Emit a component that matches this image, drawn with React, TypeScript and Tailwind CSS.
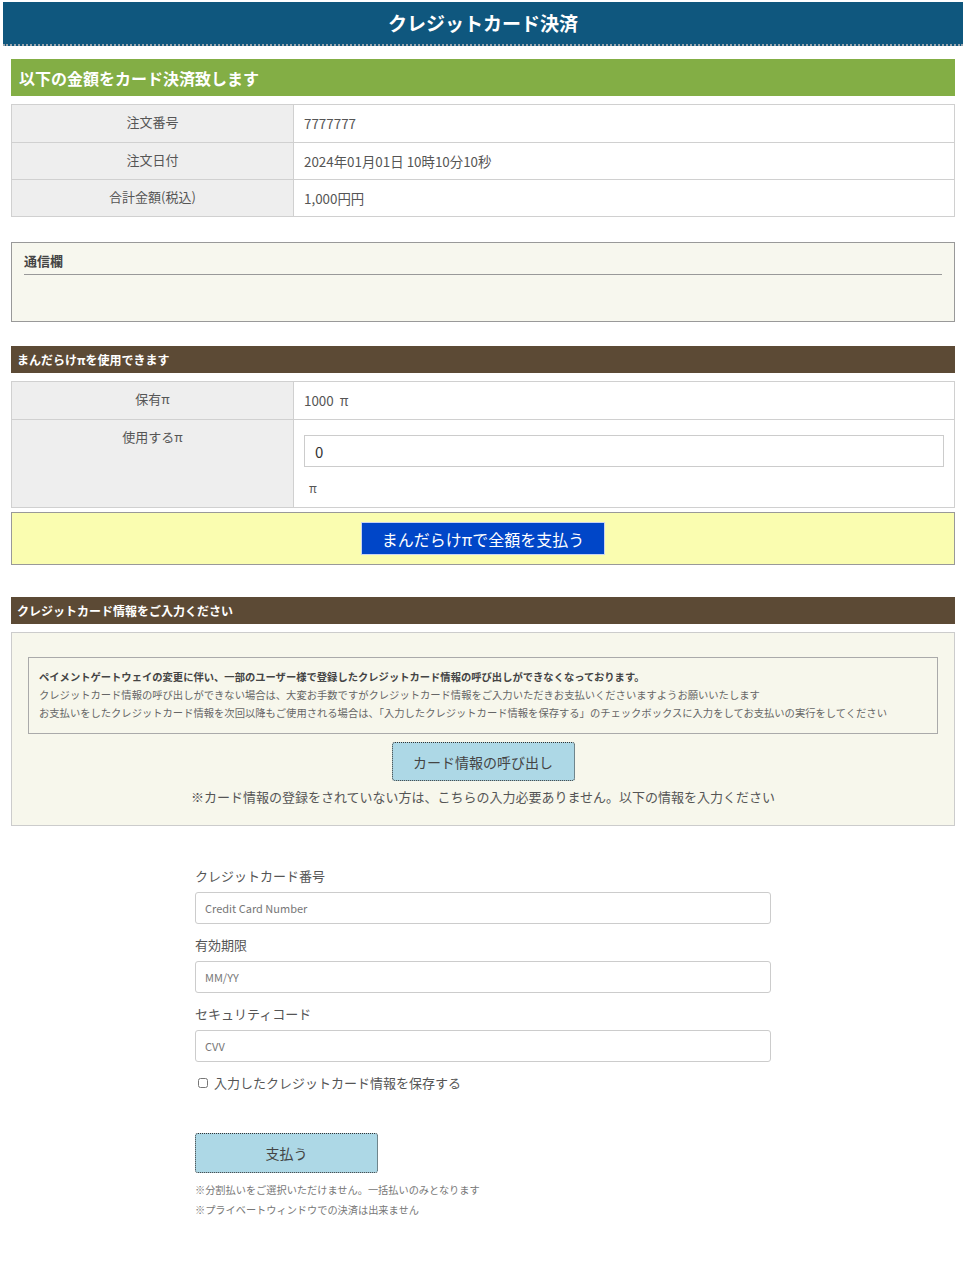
import React from "react";

const jp = { fontFamily: '"Noto Sans CJK JP", "Noto Sans", sans-serif' };

/* --------------------------- Small building blocks -------------------------- */

const SectionBar: React.FC<{ children: React.ReactNode }> = ({ children }) => (
  <div className="flex h-[27px] items-center bg-[#5c4a35] px-[6px] text-[12px] leading-[16px] font-bold text-white">
    {children}
  </div>
);

const Row: React.FC<{ label: string; children: React.ReactNode; className?: string; cellClass?: string }> = ({
  label,
  children,
  className = "h-[37px]",
  cellClass = "pt-[8px]",
}) => (
  <div className={`flex border-t border-[#d0d0d0] first:border-t-0 ${className}`}>
    <div className="w-[282px] shrink-0 border-r border-[#d0d0d0] bg-[#eeeeee] pt-[7px] text-center text-[13px] leading-[20px] text-[#555]">
      {label}
    </div>
    <div className={`flex-1 px-[10px] text-[13.4px] leading-[20px] text-[#555] ${cellClass}`}>{children}</div>
  </div>
);

const Field: React.FC<{ label: string; placeholder: string }> = ({ label, placeholder }) => (
  <div className="mb-[12px]">
    <div className="mb-[7px] text-[13px] leading-[18px] text-[#555]">{label}</div>
    <input
      placeholder={placeholder}
      className="block h-[32px] w-full rounded-[3px] border border-[#ccc] bg-white px-[9px] text-[11px] text-[#555] placeholder:text-[#777]"
    />
  </div>
);

/* --------------------------------- Page ---------------------------------- */

export default function App() {
  return (
    <div className="min-h-[1264px] bg-white pb-[40px]" style={jp}>
      {/* Page title */}
      <div className="mx-[3px] mt-[2px] flex h-[44px] items-center justify-center border-b-2 border-dotted border-[#9aa5ad] bg-[#0f577e] text-[19px] leading-[24px] font-bold text-white">
        クレジットカード決済
      </div>

      <div className="px-[11px]">
        <div className="mt-[13px] flex h-[37px] items-center bg-[#83ae45] px-[8px] text-[16px] leading-[20px] font-bold text-white">
          以下の金額をカード決済致します
        </div>

        {/* Order summary */}
        <div className="mt-[8px] border border-[#d0d0d0]">
          <Row label="注文番号">7777777</Row>
          <Row label="注文日付">2024年01月01日 10時10分10秒</Row>
          <Row label="合計金額(税込)">1,000円円</Row>
        </div>

        {/* Message box */}
        <div className="mt-[25px] h-[80px] border border-[#999] bg-[#f7f7ee] px-[12px] pt-[9px]">
          <div className="border-b border-[#999] pb-[4px] text-[13px] leading-[18px] font-bold text-[#444]">通信欄</div>
        </div>

        <div className="mt-[24px]">
          <SectionBar>まんだらけπを使用できます</SectionBar>
        </div>

        {/* Points */}
        <div className="mt-[8px] border border-[#d0d0d0]">
          <Row label="保有π">1000 &nbsp;π</Row>
          <Row label="使用するπ" className="h-[88px]" cellClass="pt-[15px]">
            <input
              defaultValue="0"
              className="block h-[32px] w-full border border-[#ccc] bg-white px-[10px] text-[15px] text-[#333]"
            />
            <div className="mt-[13px] pl-[5px] text-[12px] leading-[16px]">π</div>
          </Row>
        </div>

        <div className="mt-[4px] flex h-[53px] items-center justify-center border border-[#999] bg-[#fafdb0]">
          <button className="h-[33px] w-[244px] border border-[#c8d4f0] bg-[#0046c8] text-[16px] leading-[20px] text-white">
            まんだらけπで全額を支払う
          </button>
        </div>

        <div className="mt-[32px]">
          <SectionBar>クレジットカード情報をご入力ください</SectionBar>
        </div>

        {/* Stored card */}
        <div className="mt-[8px] border border-[#ccc] bg-[#f7f7ec] px-[16px] pb-[18px] pt-[24px]">
          <div className="border border-[#aaa] px-[10px] pb-[11px] pt-[10px] text-[10.3px] leading-[18px] text-[#666]">
            <div className="font-bold text-[#444]">
              ペイメントゲートウェイの変更に伴い、一部のユーザー様で登録したクレジットカード情報の呼び出しができなくなっております。
            </div>
            <div>クレジットカード情報の呼び出しができない場合は、大変お手数ですがクレジットカード情報をご入力いただきお支払いくださいますようお願いいたします</div>
            <div>お支払いをしたクレジットカード情報を次回以降もご使用される場合は、「入力したクレジットカード情報を保存する」のチェックボックスに入力をしてお支払いの実行をしてください</div>
          </div>
          <div className="mt-[8px] flex justify-center">
            <button className="h-[39px] w-[183px] rounded-[3px] border border-dotted border-[#333] bg-[#add8e6] text-[14px] leading-[20px] text-[#444]">
              カード情報の呼び出し
            </button>
          </div>
          <div className="mt-[6px] text-center text-[13px] leading-[20px] text-[#555]">
            ※カード情報の登録をされていない方は、こちらの入力必要ありません。以下の情報を入力ください
          </div>
        </div>

        {/* Card form */}
        <div className="mx-auto mt-[41px] w-[576px]">
          <Field label="クレジットカード番号" placeholder="Credit Card Number" />
          <Field label="有効期限" placeholder="MM/YY" />
          <Field label="セキュリティコード" placeholder="CVV" />
          <label className="flex items-center gap-[6px] pl-[3px] text-[13px] leading-[18px] text-[#555]">
            <input type="checkbox" className="h-[10px] w-[10px]" />
            入力したクレジットカード情報を保存する
          </label>
          <button className="mt-[41px] h-[40px] w-[183px] rounded-[3px] border border-dotted border-[#333] bg-[#add8e6] text-[14px] leading-[20px] text-[#444]">
            支払う
          </button>
          <div className="mt-[7px] text-[10.2px] leading-[20px] text-[#777]">
            <div>※分割払いをご選択いただけません。一括払いのみとなります</div>
            <div>※プライベートウィンドウでの決済は出来ません</div>
          </div>
        </div>
      </div>
    </div>
  );
}
